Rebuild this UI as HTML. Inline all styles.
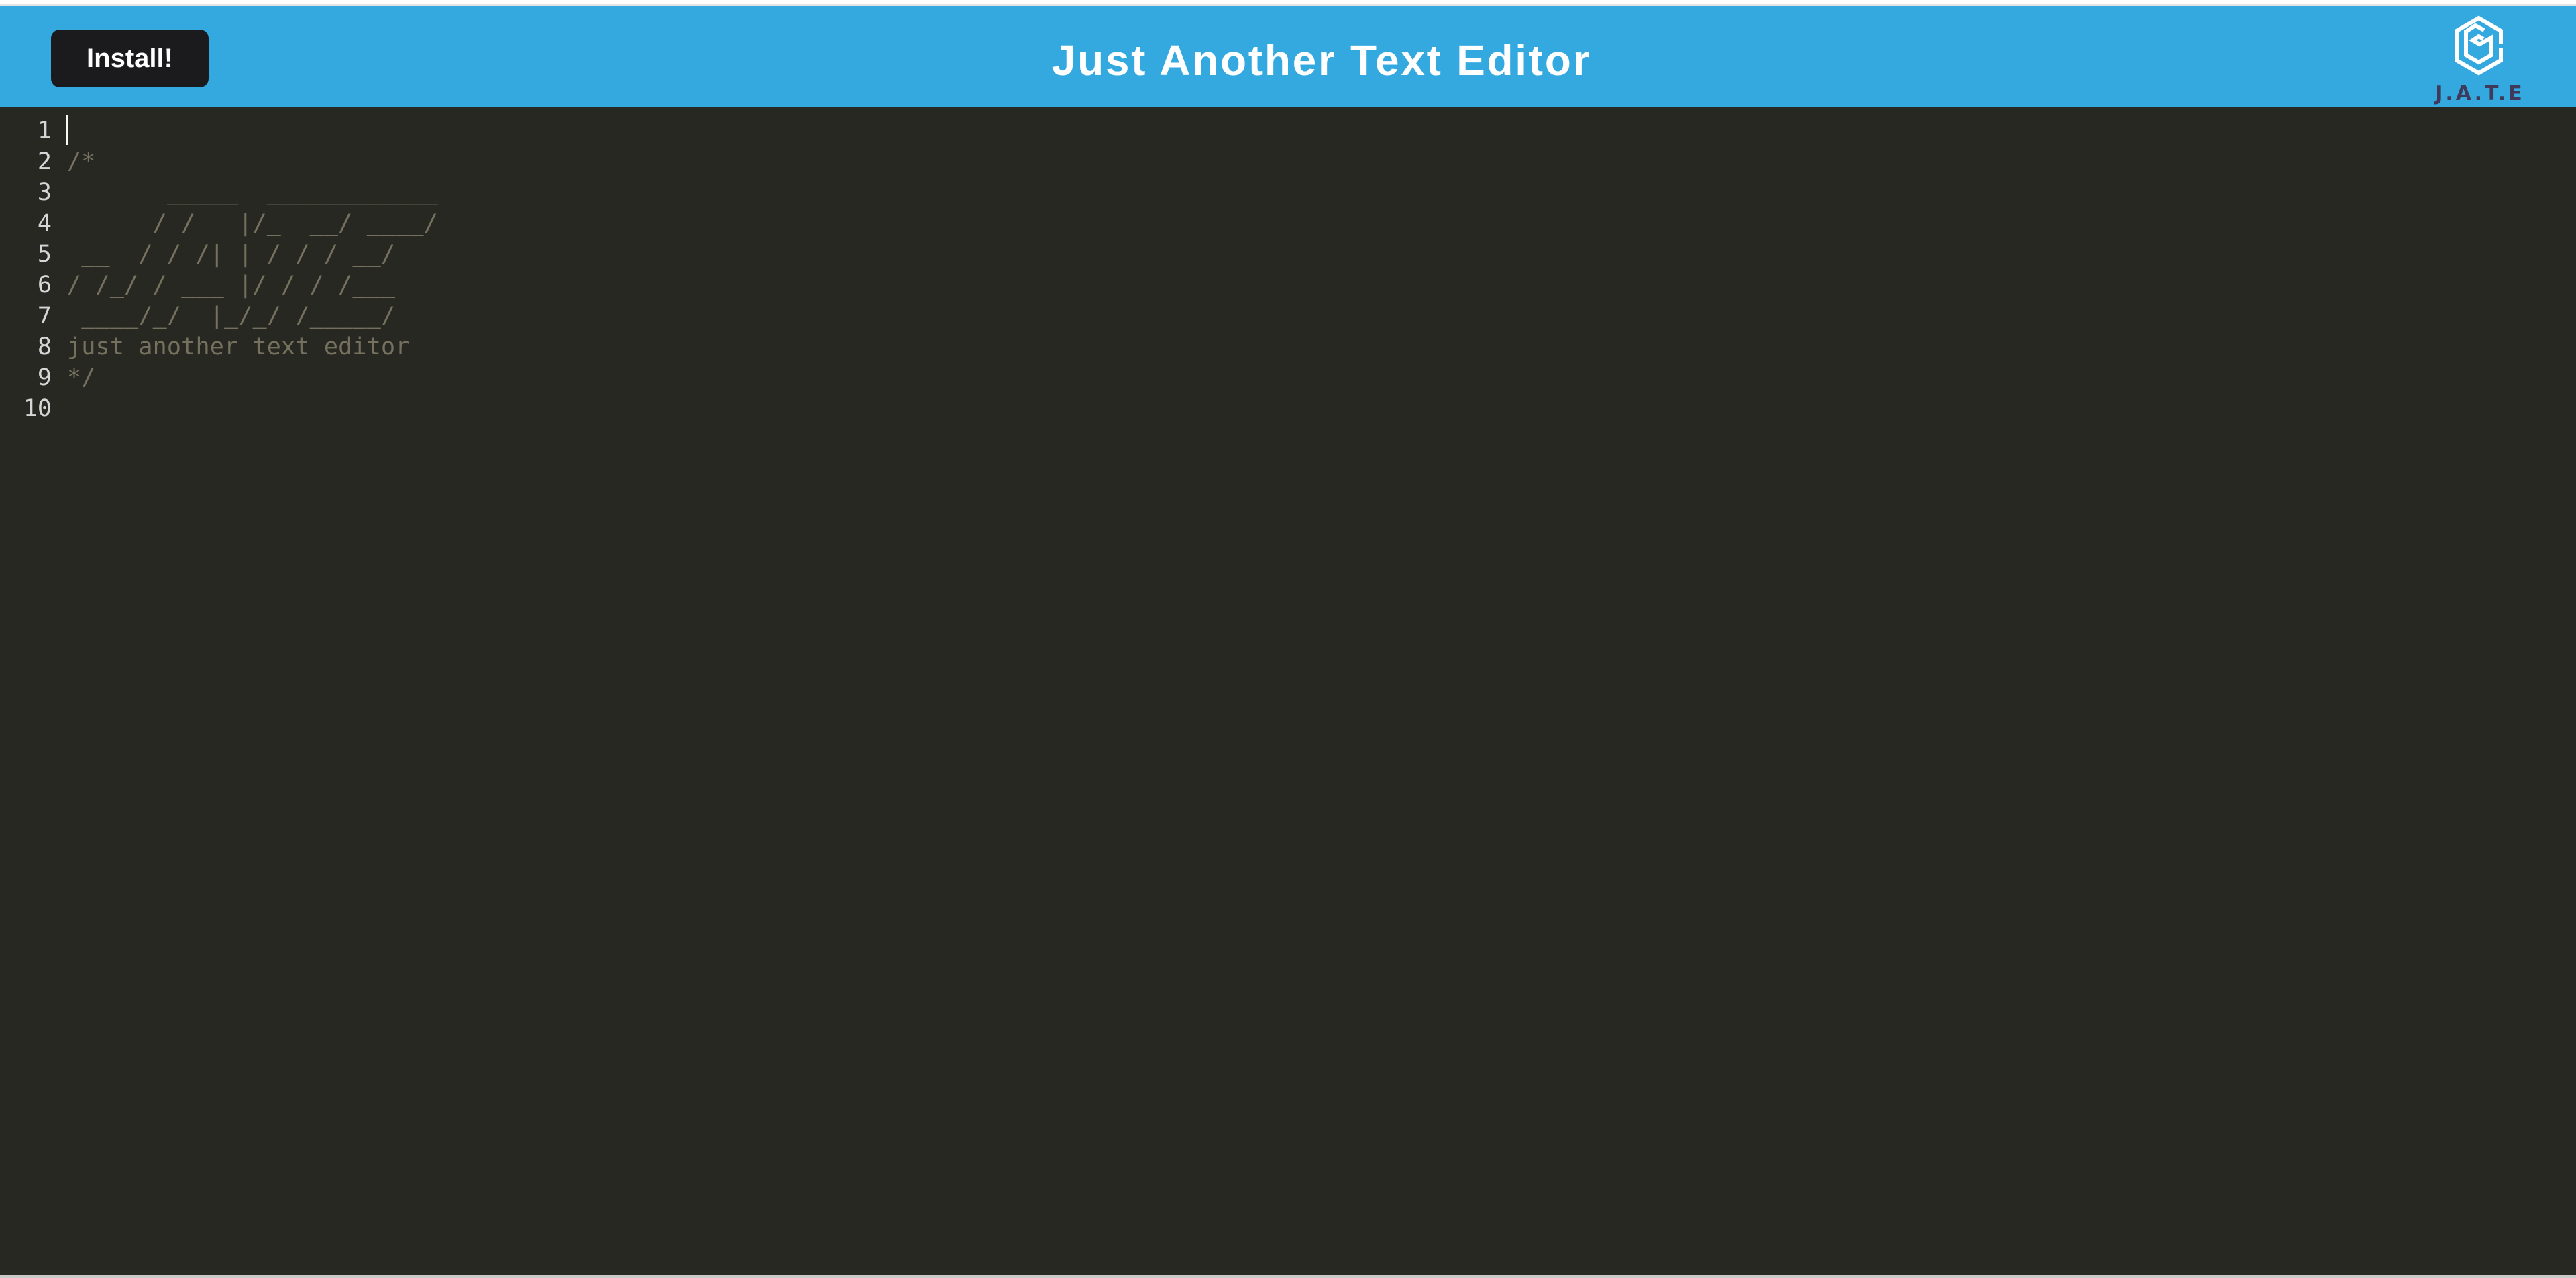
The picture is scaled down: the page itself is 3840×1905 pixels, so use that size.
<!DOCTYPE html>
<html><head><meta charset="utf-8"><style>
html,body{margin:0;padding:0;width:3840px;height:1905px;overflow:hidden;background:#272822;}
.top{position:absolute;left:0;top:0;width:3840px;height:6px;background:#fff;}
.topline{position:absolute;left:0;top:6px;width:3840px;height:3px;background:#e3e3e3;}
.hdr{position:absolute;left:0;top:9px;width:3840px;height:150px;background:#33a9e0;}
.btn{position:absolute;left:76px;top:44px;width:235px;height:86px;background:#1b1b1d;border-radius:13px;color:#fff;font:bold 40px "Liberation Sans",sans-serif;text-align:center;line-height:86px;}
.title{position:absolute;left:0;width:3840px;top:52px;text-align:center;color:#fff;font:bold 64px "Liberation Sans",sans-serif;letter-spacing:2.7px;line-height:76px;padding-left:100px;box-sizing:border-box;}
.logo{position:absolute;left:3640px;top:20px;}
.jate{position:absolute;left:3628px;top:122px;width:138px;text-align:center;color:#3f3a5c;font:bold 30px "DejaVu Sans",sans-serif;letter-spacing:4px;}
.ed{position:absolute;left:0;top:172px;font-family:"DejaVu Sans Mono",monospace;font-size:35px;line-height:46px;}
.nums{position:absolute;left:0;width:77px;text-align:right;color:#d6d6d6;}
.code{position:absolute;left:100px;color:#75715e;white-space:pre;letter-spacing:0.2px;}
.cur{position:absolute;left:98px;top:171px;width:3px;height:45px;background:#f8f8f0;}
.bot{position:absolute;left:0;top:1901px;width:3840px;height:4px;background:#c8c8c8;}
</style></head><body>
<div class="top"></div><div class="topline"></div>
<div class="hdr"></div>
<div class="btn">Install!</div>
<div class="title">Just Another Text Editor</div>
<svg class="logo" width="110" height="100" viewBox="0 0 110 100">
<g fill="none" stroke="#fff" stroke-width="6" stroke-linejoin="miter">
<path d="M88,45 L88,26 L55,7 L22,26 L22,70 L55,89 L88,70 L88,52"/>
<path d="M63,25 L50,18 L36,27 L36,62 L55,73 L74,62 L74,36 L56,46 L46,40 L55,34 L62,38"/>
</g></svg>
<div class="jate">J.A.T.E</div>
<div class="ed">
<div class="nums">1<br>2<br>3<br>4<br>5<br>6<br>7<br>8<br>9<br>10</div>
<div class="code">
/*
       _____  ____________
      / /   |/_  __/ ____/
 __  / / /| | / / / __/
/ /_/ / ___ |/ / / /___
 ____/_/  |_/_/ /_____/
just another text editor
*/
</div>
</div>
<div class="cur"></div>
<div class="bot"></div>
</body></html>
